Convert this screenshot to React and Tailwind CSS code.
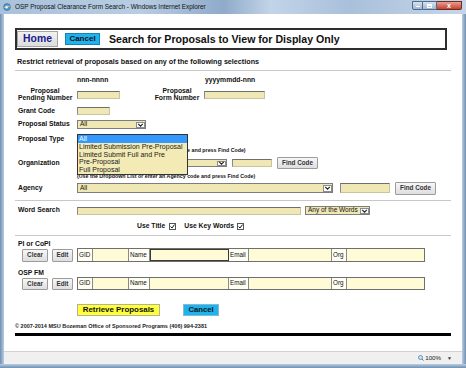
import React from "react";

const FONT = "font-['Liberation_Sans',Arial,sans-serif]";

function Chevron() {
  return (
    <svg width="7" height="6" viewBox="0 0 7 6" className="block">
      <path d="M1.2 1.8 L3.5 4.2 L5.8 1.8" stroke="#222" strokeWidth="1.1" fill="none" />
    </svg>
  );
}

function Inp({ className = "" }) {
  return (
    <div
      className={`bg-[#f0e8b4] border border-[#c9c4a0] border-t-[#6e6e6e] border-l-[#8a8a8a] shrink-0 ${className}`}
    />
  );
}

function Sel({ className = "", text = "" }) {
  return (
    <div className={`flex items-stretch bg-[#f0e8b4] border border-[#7d7d7d] shrink-0 ${className}`}>
      <span className="flex-1 flex items-center pl-[2px] text-[6.5px] leading-none text-[#111] whitespace-nowrap overflow-hidden">
        {text}
      </span>
      <span className="w-[9px] my-[0.5px] mr-[0.5px] bg-white border border-[#8c8c8c] flex items-center justify-center">
        <Chevron />
      </span>
    </div>
  );
}

function GrayBtn({ className = "", children }) {
  return (
    <div
      className={`shrink-0 flex items-center justify-center rounded-[1px] border border-[#9c9c9c] bg-[linear-gradient(#f7f7f7,#dedede)] text-[6.3px] font-bold text-[#333] leading-none ${className}`}
    >
      {children}
    </div>
  );
}

function Check() {
  return (
    <span className="w-[7px] h-[7px] border border-[#555] bg-white flex items-center justify-center shrink-0">
      <svg width="5" height="5" viewBox="0 0 5 5">
        <path d="M0.6 2.5 L2 4 L4.5 0.6" stroke="#111" strokeWidth="1" fill="none" />
      </svg>
    </span>
  );
}

function PersonTable({ focused, className = "" }) {
  const lab = "flex items-center pl-[1px] text-[6.3px] text-[#111] leading-none bg-[#fffff4] border-r border-[#8a8a8a] shrink-0";
  const inp = "bg-[#fffbd6] border-r border-[#8a8a8a] shrink-0";
  return (
    <div className={`flex border border-[#6f6f6f] w-[348px] shrink-0 ${className}`}>
      <div className={`${lab} w-[15px]`}>GID</div>
      <div className={`${inp} w-[36px]`} />
      <div className={`${lab} w-[21px]`}>Name</div>
      {focused ? (
        <div className="w-[79px] shrink-0 bg-[#fffbd6] border-[1.5px] border-[#3a3a3a]" />
      ) : (
        <div className={`${inp} w-[79px]`} />
      )}
      <div className={`${lab} w-[20px]`}>Email</div>
      <div className={`${inp} w-[83px]`} />
      <div className={`${lab} w-[15px]`}>Org</div>
      <div className="flex-1 bg-[#fffbd6]" />
    </div>
  );
}

export default function App() {
  const label = "text-[6.8px] font-bold text-[#111] whitespace-nowrap";
  const hint = "text-[5.3px] font-bold text-[#111] leading-none whitespace-nowrap";
  return (
    <div className={`w-[466px] h-[368px] flex flex-col overflow-hidden bg-[#b6cbe1] ${FONT}`}>
      {/* Title bar */}
      <div className="h-[14px] flex items-start bg-[linear-gradient(90deg,#a9c1da_0%,#b8cde3_30%,#8fabc9_48%,#c2d4e8_58%,#a8c0da_75%,#c6d6e8_100%)] shrink-0">
        <div className="flex items-center h-[14px] pl-[3px] gap-[4px]">
          <svg width="8" height="8" viewBox="0 0 8 8">
            <circle cx="4" cy="4" r="3.4" fill="#4a9bd8" stroke="#2c6aa0" strokeWidth="0.6" />
            <path d="M1.2 4.6 Q4 2.2 7 3.4" stroke="#f0c23a" strokeWidth="1" fill="none" />
            <circle cx="3.6" cy="4.2" r="1.2" fill="#e8f4ff" />
          </svg>
          <span className="text-[6.4px] text-[#111] leading-none whitespace-nowrap">
            OSP Proposal Clearance Form Search - Windows Internet Explorer
          </span>
        </div>
        <div className="ml-auto mr-[4px] mt-[1px] flex h-[9px]">
          <div className="w-[11px] h-full border border-[#4d6a8a] rounded-bl-[2px] bg-[linear-gradient(#d7e3f0,#9fb7d1)] flex items-end justify-center pb-[2px]">
            <div className="w-[4px] h-[1.5px] bg-white" />
          </div>
          <div className="w-[14px] h-full border-y border-r border-[#4d6a8a] bg-[linear-gradient(#d7e3f0,#9fb7d1)] flex items-center justify-center">
            <div className="w-[5px] h-[4px] border border-white border-t-2" />
          </div>
          <div className="w-[25px] h-full border-y border-r border-[#6d2b26] rounded-br-[2px] bg-[linear-gradient(#e8a08f,#c7402f)] flex items-center justify-center text-white text-[7px] font-bold leading-none">
            x
          </div>
        </div>
      </div>

      {/* Middle */}
      <div className="flex flex-1 min-h-0">
        <div className="w-[4px] bg-[linear-gradient(90deg,#6f8fb0,#b9cee4)] shrink-0" />
        <div className="flex-1 flex flex-col bg-white min-w-0">
          {/* page */}
          <div className="flex-1 min-h-0 flex flex-col *:shrink-0">
            {/* header box */}
            <div className="mt-[14px] ml-[11px] w-[432px] h-[22px] border-2 border-[#2e2e2e] flex items-center">
              <div className="w-[41px] h-[16px] bg-[linear-gradient(#f1f1f1,#dcdcdc)] border border-[#a5a5a5] flex items-center justify-center text-[10.4px] font-bold text-[#1b1b8e] leading-none">
                Home
              </div>
              <div className="ml-[7px] w-[35px] h-[12px] bg-[#1fb2ee] border border-[#1684b4] flex items-center justify-center text-[8px] font-bold text-[#111] leading-none">
                Cancel
              </div>
              <div className="ml-[9px] text-[10.6px] font-bold text-[#111] leading-none whitespace-nowrap">
                Search for Proposals to View for Display Only
              </div>
            </div>

            {/* restrict */}
            <div className="mt-[5px] h-[14px] ml-[13px] flex items-center">
              <span className="text-[7.2px] font-bold text-[#111] leading-none whitespace-nowrap">
                Restrict retrieval of proposals based on any of the following selections
              </span>
            </div>
            <div className="mt-[1px] mx-[11px] h-px bg-[#c8c8c8]" />

            {/* form rows */}
            <div className="pl-[14px] flex flex-col *:shrink-0">
              <div className="mt-[4px] h-[10px] flex items-center">
                <div className="w-[59px] shrink-0" />
                <div className={`${label} leading-none w-[128px]`}>nnn-nnnn</div>
                <div className={`${label} leading-none`}>yyyymmdd-nnn</div>
              </div>

              <div className="mt-[2px] h-[14px] flex items-end">
                <div className={`${label} w-[54px] text-center leading-[7px]`}>
                  Proposal
                  <br />
                  Pending Number
                </div>
                <Inp className="ml-[5px] mb-[2px] w-[43px] h-[8px]" />
                <div className={`${label} ml-[32px] w-[50px] text-center leading-[7px]`}>
                  Proposal
                  <br />
                  Form Number
                </div>
                <Inp className="ml-[2px] mb-[2px] w-[61px] h-[8px]" />
              </div>

              <div className="mt-[5px] h-[10px] flex items-center">
                <div className={`${label} leading-none w-[59px]`}>Grant Code</div>
                <Inp className="w-[33px] h-[8px]" />
              </div>

              <div className="mt-[3px] h-[11px] flex items-center">
                <div className={`${label} leading-none w-[59px]`}>Proposal Status</div>
                <Sel className="w-[69px] h-[9px]" text="All" />
              </div>

              <div className="mt-[4px] h-[10px] flex items-center relative z-10">
                <div className={`${label} leading-none w-[59px]`}>Proposal Type</div>
                <div className="absolute left-[59px] top-0 w-[111px] h-[41px] bg-[#f3eab6] border border-[#333] flex flex-col text-[7px] text-[#1a1a1a] leading-[7.6px] whitespace-nowrap">
                  <div className="bg-[#3399ff] text-white pl-[1px] h-[8px] leading-[8px]">All</div>
                  <div className="pl-[1px]">Limited Submission Pre-Proposal</div>
                  <div className="pl-[1px]">Limited Submit Full and Pre</div>
                  <div className="pl-[1px]">Pre-Proposal</div>
                  <div className="pl-[1px]">Full Proposal</div>
                </div>
              </div>

              <div className="mt-[3px] h-[8px] flex items-center">
                <div className="w-[59px] shrink-0" />
                <div className={hint}>(Use the Dropdown List or enter an Org code and press Find Code)</div>
              </div>

              <div className="mt-[1px] h-[14px] flex items-center">
                <div className={`${label} leading-none w-[59px]`}>Organization</div>
                <Sel className="w-[150px] h-[8px]" text="" />
                <Inp className="ml-[5px] w-[40px] h-[8px]" />
                <GrayBtn className="ml-[5px] w-[41px] h-[12px]">Find Code</GrayBtn>
              </div>

              <div className="mt-[3px] h-[8px] flex items-center">
                <div className="w-[59px] shrink-0" />
                <div className={hint}>(Use the Dropdown List or enter an Agency code and press Find Code)</div>
              </div>

              <div className="h-[14px] flex items-center">
                <div className={`${label} leading-none w-[59px]`}>Agency</div>
                <Sel className="w-[256px] h-[10px]" text="All" />
                <Inp className="ml-[7px] w-[50px] h-[10px]" />
                <GrayBtn className="ml-[5px] w-[41px] h-[13px]">Find Code</GrayBtn>
              </div>
            </div>

            <div className="mt-[5px] mx-[11px] h-px bg-[#c8c8c8]" />

            <div className="pl-[14px] flex flex-col *:shrink-0">
              <div className="mt-[4px] h-[11px] flex items-center">
                <div className={`${label} leading-none w-[59px]`}>Word Search</div>
                <Inp className="w-[224px] h-[8px]" />
                <Sel className="ml-[4px] w-[65px] h-[9px]" text="Any of the Words" />
              </div>

              <div className="mt-[5px] h-[10px] flex items-center">
                <div className="w-[119px] shrink-0" />
                <span className={`${label} leading-none`}>Use Title</span>
                <span className="ml-[4px]">
                  <Check />
                </span>
                <span className={`${label} leading-none ml-[8px]`}>Use Key Words</span>
                <span className="ml-[3px]">
                  <Check />
                </span>
              </div>
            </div>

            <div className="mt-[4px] mx-[11px] h-px bg-[#c8c8c8]" />

            <div className="pl-[14px] flex flex-col *:shrink-0">
              <div className="mt-[4px] h-[8px] flex items-center">
                <div className={`${label} leading-none`}>PI or CoPI</div>
              </div>
              <div className="h-[14px] flex items-stretch">
                <GrayBtn className="ml-[4px] mt-[1px] w-[26px] h-[13px]">Clear</GrayBtn>
                <GrayBtn className="ml-[4px] mt-[1px] w-[21px] h-[13px]">Edit</GrayBtn>
                <PersonTable focused className="ml-[4px]" />
              </div>

              <div className="mt-[7px] h-[8px] flex items-center">
                <div className={`${label} leading-none`}>OSP FM</div>
              </div>
              <div className="h-[13px] flex items-stretch">
                <GrayBtn className="ml-[4px] mt-[1px] w-[26px] h-[12px]">Clear</GrayBtn>
                <GrayBtn className="ml-[4px] mt-[1px] w-[21px] h-[12px]">Edit</GrayBtn>
                <PersonTable className="ml-[4px]" />
              </div>

              <div className="mt-[14px] h-[12px] flex items-stretch">
                <div className="ml-[59px] w-[83px] bg-[#ffff3a] border border-[#b2b29a] flex items-center justify-center text-[7.9px] font-bold text-[#111] leading-none">
                  Retrieve Proposals
                </div>
                <div className="ml-[23px] w-[36px] bg-[#1cb3ef] border border-[#8ab8cc] flex items-center justify-center text-[7.7px] font-bold text-[#111] leading-none">
                  Cancel
                </div>
              </div>
            </div>

            <div className="mt-[7px] ml-[11px] h-[8px] flex items-center">
              <span className="text-[5.5px] font-bold text-[#222] leading-none whitespace-nowrap">
                © 2007-2014 MSU Bozeman Office of Sponsored Programs (406) 994-2381
              </span>
            </div>
            <div className="relative z-20 mt-[2px] mx-[11px] h-[3px] bg-black border-y border-black" />
          </div>

          {/* status bar */}
          <div className="h-[13px] shrink-0 bg-[#f0f0f0] border-t border-[#d2d2d2] flex items-center justify-end pr-[10px]">
            <svg width="6" height="6" viewBox="0 0 6 6" className="mr-[1px]">
              <circle cx="2.5" cy="2.5" r="2" fill="#cfe3f5" stroke="#4a7fb5" strokeWidth="0.8" />
              <path d="M4 4 L5.6 5.6" stroke="#4a7fb5" strokeWidth="1" />
            </svg>
            <span className="text-[6.2px] text-[#222] leading-none">100%</span>
            <span className="ml-[6px] text-[5px] text-[#333] leading-none">▼</span>
          </div>
        </div>
        <div className="w-[4px] bg-[linear-gradient(90deg,#b9cee4,#6f8fb0)] shrink-0" />
      </div>
      <div className="h-[4px] shrink-0 bg-[linear-gradient(#b9cee4,#6f8fb0)]" />
    </div>
  );
}
